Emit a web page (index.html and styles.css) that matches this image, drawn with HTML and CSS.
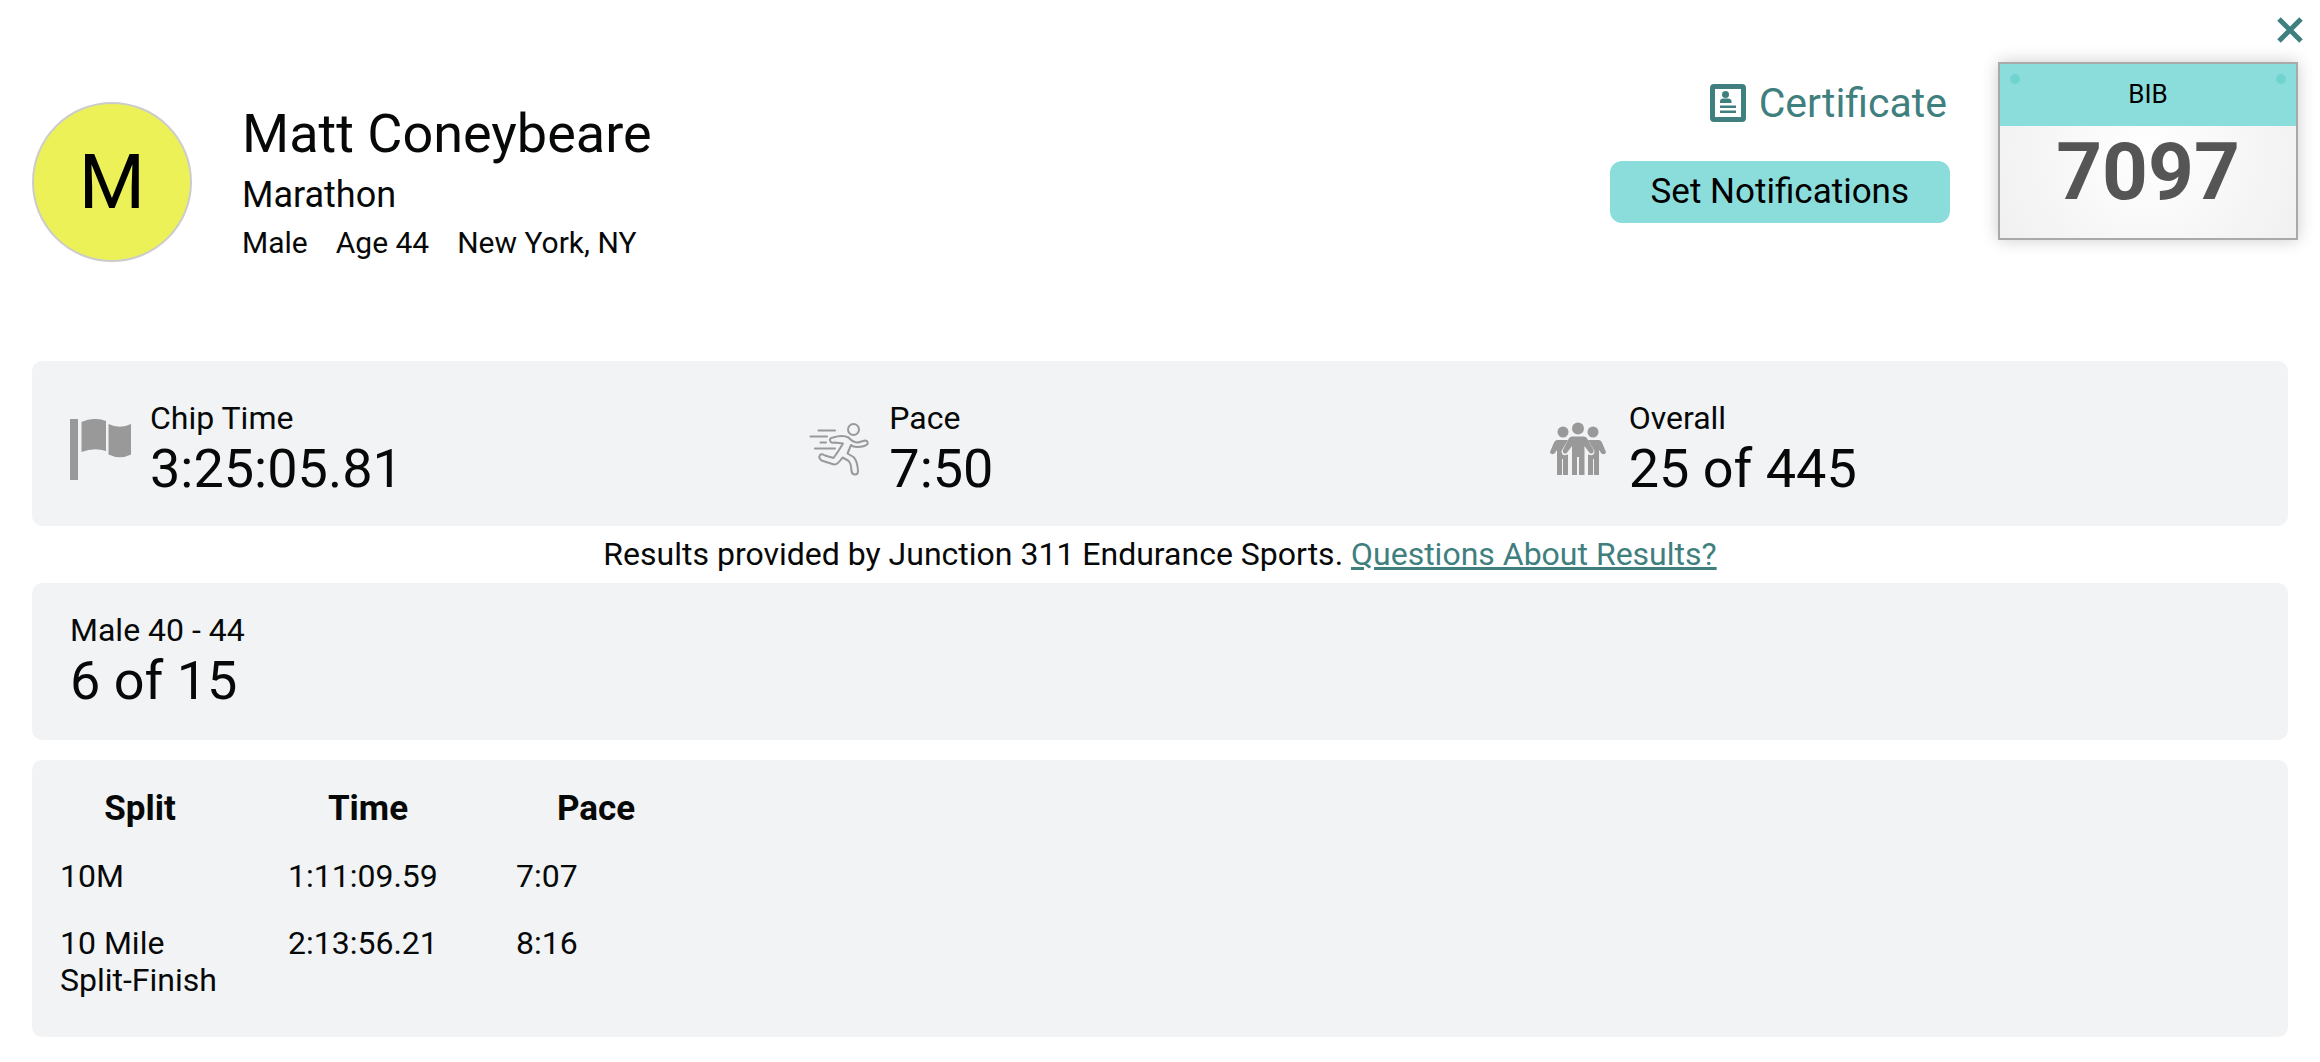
FILE: index.html
```html
<!DOCTYPE html>
<html lang="en">
<head>
<meta charset="utf-8">
<meta name="viewport" content="width=device-width, initial-scale=1">
<title>Matt Coneybeare – Marathon Results</title>
<link rel="stylesheet" href="styles.css">
</head>
<body>
<div class="topbar">
  <button class="close" type="button" aria-label="Close">
    <svg width="26" height="26" viewBox="0 0 26 26"><path d="M2 2L24 24M24 2L2 24" stroke="currentColor" stroke-width="5"/></svg>
  </button>
</div>
<header class="header">
  <div class="avatar">M</div>
  <div class="person">
    <h1 class="name">Matt Coneybeare</h1>
    <p class="race">Marathon</p>
    <p class="facts"><span>Male</span><span>Age 44</span><span>New York, NY</span></p>
  </div>
  <div class="actions">
    <a class="certificate" href="#certificate">
      <svg width="36" height="38" viewBox="0 0 36 38" fill="currentColor"><path fill-rule="evenodd" d="M4 0H32Q36 0 36 4V34Q36 38 32 38H4Q0 38 0 34V4Q0 0 4 0ZM5 5V33H31V5Z"/><circle cx="15.500" cy="10.500" r="3.500"/><path d="M10 19V17.500Q10 14.500 13.500 14.500H17.500Q21.500 14.500 21.500 17.500V19ZM10 21.500H26V24H10ZM10 26.500H26V29H10Z"/></svg>
      Certificate
    </a>
    <button class="notify" type="button">Set Notifications</button>
  </div>
  <div class="bib">
    <div class="bib-head"><span class="hole"></span><span class="bib-label">BIB</span><span class="hole"></span></div>
    <div class="bib-number">7097</div>
  </div>
</header>
<main class="main">
  <section class="card stats">
    <div class="stat">
      <svg class="icon" width="62" height="62" viewBox="0 0 62 62" fill="currentColor"><path d="M0 0H8V61H0ZM11.500 3Q24-2.500 36 2V32Q24 28 11.500 33ZM38.500 5Q50 10.500 61 5V35.500Q50 41 38.500 35.500Z"/></svg>
      <div><div class="label">Chip Time</div><div class="value">3:25:05.81</div></div>
    </div>
    <div class="stat">
      <svg class="icon" width="62" height="62" viewBox="0 0 62 62" fill="none" stroke="currentColor" stroke-width="2" stroke-linecap="round" stroke-linejoin="round"><circle cx="44.500" cy="10.500" r="5.500"/><path d="M9.500 11.500H26M1.500 17.500H18M11.500 23.500H17M6 29.500H26M34 24.500L25.500 23.500Q22 24.500 21 21.500Q20.500 19 24 18.500Q34 15.500 39.500 18.500Q44 23.500 49 23.500L56 21.500Q59.500 22 58.500 25Q55.500 28 48 28Q44 28 42 26L38.500 34.500L44.500 38Q48.500 42 49 52Q49 55.500 46 55.500Q43 55.500 42.500 52Q42 43.500 39 41.500L33.500 38.500Q28.500 46 25 45.500L12.500 41.500Q9 38.500 11 36Q12.500 34.500 16 36.500L24.500 39Q29 33 34 24.500Z"/></svg>
      <div><div class="label">Pace</div><div class="value">7:50</div></div>
    </div>
    <div class="stat">
      <svg class="icon" width="62" height="62" viewBox="0 0 62 62" fill="currentColor"><circle cx="14" cy="13" r="5.500"/><circle cx="44" cy="13" r="5.500"/><g id="side"><path d="M8 21H19L12.500 32Q12.500 37 17 36L19 35.500V56H14V40H13V56H8V31L5.500 34.500Q2 36.500 1 33L5 23.500Q6 21 8 21Z"/></g><use href="#side" transform="translate(58 0) scale(-1 1)"/><circle cx="29" cy="9.500" r="6"/><path d="M23 17.500H35Q37.500 17.500 38.500 20L44.500 31Q45 34.500 42 34.500Q40.500 34.500 39.500 32.500L35.500 27V56H30V38H28V56H23V27L18.500 33Q17 35.500 14.500 34Q13.500 33 14 31L19.500 20Q20.500 17.500 23 17.500Z"/></svg>
      <div><div class="label">Overall</div><div class="value">25 of 445</div></div>
    </div>
  </section>
  <p class="provider">Results provided by Junction 311 Endurance Sports. <a href="#questions">Questions About Results?</a></p>
  <section class="card division">
    <div class="label">Male 40 - 44</div><div class="value">6 of 15</div>
  </section>
  <section class="card splits">
    <table>
      <thead><tr><th scope="col">Split</th><th scope="col">Time</th><th scope="col">Pace</th></tr></thead>
      <tbody>
        <tr><td>10M</td><td>1:11:09.59</td><td>7:07</td></tr>
        <tr><td>10 Mile Split-Finish</td><td>2:13:56.21</td><td>8:16</td></tr>
      </tbody>
    </table>
  </section>
</main>
</body>
</html>
```
FILE: styles.css
```css
* {
  box-sizing: border-box;
}

body {
  margin: 0;
  background: #fff;
  color: #070909;
  font-family: Roboto, "Liberation Sans", sans-serif;
  font-size: 32px;
  line-height: 38px;
}

h1,
p {
  margin: 0;
  font-weight: 400;
}

button {
  border: 0;
  font: inherit;
  cursor: pointer;
}

a {
  color: #3f807f;
  text-decoration-thickness: 3px;
  text-underline-offset: 2px;
}

.topbar {
  display: flex;
  justify-content: flex-end;
  padding: 17px 17px 0;
}

.close {
  display: flex;
  padding: 0;
  background: none;
  color: #3f807f;
}

.header {
  display: flex;
  align-items: flex-start;
  padding: 19px 22px 0 32px;
}

.avatar {
  display: flex;
  align-items: center;
  justify-content: center;
  width: 160px;
  height: 160px;
  margin-top: 40px;
  border: 2px solid #ccc;
  border-radius: 50%;
  background: #ecf158;
  color: #000;
  font-size: 76px;
}

.person {
  flex: 1;
  margin: 38px 0 0 50px;
}

.name {
  font-size: 54px;
  line-height: 68px;
}

.race {
  margin-top: 6px;
  font-size: 36px;
  line-height: 42px;
}

.facts {
  display: flex;
  gap: 28px;
  margin-top: 8px;
  font-size: 30px;
}

.actions {
  display: flex;
  flex-direction: column;
  align-items: flex-end;
  gap: 33px;
  margin: 16px 48px 0 0;
}

.certificate {
  display: flex;
  align-items: center;
  gap: 13px;
  padding-right: 3px;
  font-size: 41px;
  line-height: 50px;
  text-decoration: none;
}

.notify {
  padding: 10px 41px;
  border-radius: 12px;
  background: #8bdddb;
  color: #000;
  font-size: 35px;
  line-height: 42px;
}

.bib {
  width: 300px;
  border: 2px solid #a9a9a9;
  background: radial-gradient(circle, #fff, #f0f0f0);
  box-shadow: 0 0 16px rgba(0, 0, 0, 0.2);
}

.bib-head {
  display: flex;
  justify-content: space-between;
  height: 62px;
  padding: 10px;
  background: #8bdddb;
}

.hole {
  width: 10px;
  height: 10px;
  border-radius: 50%;
  background: #6fd3d0;
}

.bib-label {
  color: #000;
  font-size: 26px;
  line-height: 40px;
}

.bib-number {
  height: 112px;
  color: #555;
  font-size: 80px;
  font-weight: 700;
  line-height: 92px;
  text-align: center;
}

.main {
  padding: 0 32px;
  margin-top: 99px;
}

.card {
  border-radius: 10px;
  background: #f1f3f5;
}

.stats {
  display: grid;
  grid-template-columns: repeat(3, 1fr);
  padding: 38px 0 25px 38px;
}

.stat {
  display: flex;
  align-items: center;
  gap: 18px;
}

.icon {
  flex: none;
  color: #999;
}

.value {
  font-size: 54px;
  line-height: 64px;
}

.provider {
  padding: 9px 0 10px;
  text-align: center;
}

.division {
  padding: 28px 38px 27px;
}

.splits {
  margin-top: 20px;
  padding: 20px 26px 16px;
}

table {
  border-spacing: 2px 0;
  table-layout: fixed;
  width: 686px;
}

th,
td {
  padding: 8px 66px 22px 0;
  line-height: 37px;
  text-align: left;
  vertical-align: top;
}

th {
  padding-bottom: 20px;
  font-size: 35px;
  line-height: 42px;
  text-align: center;
}
```
